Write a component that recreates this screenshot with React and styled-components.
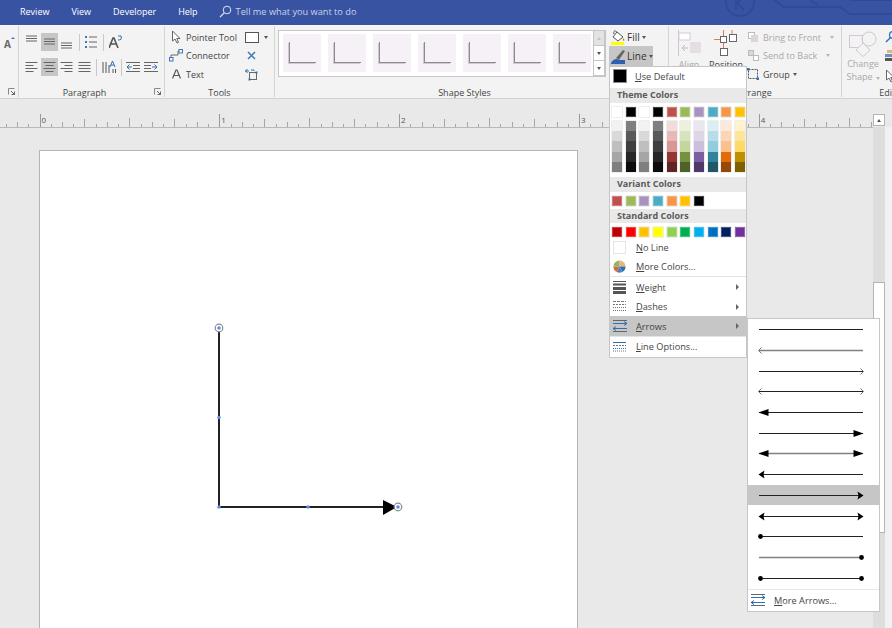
import styled, { createGlobalStyle } from 'styled-components'

const GlobalStyle = createGlobalStyle`
    html, body {
        margin:0;
        padding:0;
        background:#e9e9e9;
    }
    body {
        font-family:"Open Sans", "Liberation Sans", sans-serif;
    }
`

const Window = styled.div`
    position:relative;
    display:flex;
    flex-direction:column;
    width:892px;
    height:628px;
    overflow:hidden;
    background:#e9e9e9;
`

/* title bar */
const TitleBar = styled.div`
    position:relative;
    display:flex;
    align-items:center;
    flex:none;
    height:25px;
    padding-left:20px;
    background:#3953a3;
    color:#ffffff;
    font-size:9px;
`
const Tab = styled.span`
    margin-right:${(p) => p.$gap}px;
    padding-bottom:2px;
`
const TellMe = styled.span`
    display:flex;
    align-items:center;
    gap:4px;
    padding-bottom:2px;
    font-size:9.2px;
    color:#c9d2e8;
`
const TitleArt = styled.svg`
    position:absolute;
    top:0;
    right:0;
`

/* ribbon */
const Ribbon = styled.div`
    display:flex;
    flex:none;
    height:72px;
    background:#f3f3f3;
    border-top:1px solid #f8f8f8;
    border-bottom:1px solid #d2d2d2;
    color:#444444;
    font-size:9px;
`
const Group = styled.div`
    position:relative;
    display:flex;
    flex-direction:column;
    flex:none;
    width:${(p) => p.$width}px;
    height:71px;
    border-right:1px solid #d4d4d4;
    box-sizing:border-box;
`
const GroupBody = styled.div`
    display:flex;
    flex:1;
    min-height:0;
`
const GroupLabel = styled.div`
    flex:none;
    height:11px;
    padding-right:${(p) => p.$shift || 0}px;
    text-align:center;
    white-space:nowrap;
    line-height:14px;
    font-size:9px;
`
const Launcher = styled.svg`
    position:absolute;
    right:3px;
    bottom:2px;
`
const Stack = styled.div`
    display:flex;
    flex-direction:column;
    padding-top:${(p) => p.$top || 0}px;
    gap:${(p) => p.$gap || 0}px;
`
const ShrunkFont = styled.div`
    position:relative;
    padding:12px 0 0 4px;
    font-size:10px;
    font-weight:700;
    line-height:12px;
    color:#666666;
`
const ShrinkCaret = styled.span`
    position:absolute;
    top:11px;
    left:11px;
    width:0;
    height:0;
    border-left:2px solid transparent;
    border-right:2px solid transparent;
    border-bottom:2px solid #3f78b8;
`
const IconRow = styled.div`
    display:flex;
    align-items:center;
    flex:none;
    height:18px;
    padding-left:4px;
`
const IconCell = styled.div`
    display:flex;
    align-items:center;
    justify-content:center;
    width:17.5px;
    height:18px;
    background:${(p) => (p.$on ? '#c6c6c6' : 'transparent')};
`
const Divider = styled.span`
    width:1px;
    height:17px;
    margin:0 ${(p) => p.$space}px;
    background:#c8c8c8;
`

const ToolRow = styled.div`
    display:flex;
    align-items:center;
    flex:none;
    height:18.5px;
    white-space:nowrap;
`
const ToolIcon = styled.span`
    display:flex;
    align-items:center;
    justify-content:center;
    flex:none;
    width:20px;
`
const ToolColumn = styled.div`
    display:flex;
    flex-direction:column;
    flex:none;
    width:72px;
    padding:2px 0 0 1px;
    box-sizing:border-box;
`
const ToolSide = styled.div`
    display:flex;
    flex-direction:column;
    align-items:flex-start;
    padding:2px 0 0 8px;
`
const SideCell = styled.div`
    display:flex;
    align-items:center;
    flex:none;
    gap:5px;
    height:18.5px;
    padding-left:${(p) => p.$left || 0}px;
`
const OutlineBox = styled.span`
    width:12px;
    height:9px;
    background:#ffffff;
    border:1px solid #555555;
`
const Caret = styled.span`
    display:inline-block;
    width:0;
    height:0;
    margin-left:${(p) => p.$space ?? 3}px;
    border-left:2.5px solid transparent;
    border-right:2.5px solid transparent;
    border-top:3px solid ${(p) => p.$color || '#555555'};
    transform:${(p) => (p.$up ? 'rotate(180deg)' : 'none')};
`

const Gallery = styled.div`
    display:flex;
    flex:none;
    height:47px;
    margin:4px 0 0 3px;
    background:#ffffff;
    border:1px solid #c6c6c6;
    box-sizing:border-box;
`
const GalleryTiles = styled.div`
    display:flex;
    gap:7px;
    width:314px;
    padding:3px 0 0 4px;
    box-sizing:border-box;
`
const Tile = styled.div`
    flex:none;
    width:38px;
    height:38px;
    padding:8px 0 0 6px;
    background:#f6f1f7;
    box-sizing:border-box;
`
const TileShape = styled.div`
    width:26px;
    height:20px;
    border-left:1px solid #8e8a90;
    border-bottom:1px solid #8e8a90;
    box-shadow:-1px 1px 0 #cfcbd1;
`
const GalleryScroll = styled.div`
    display:flex;
    flex-direction:column;
    flex:none;
    width:12px;
    margin-top:-1px;
`
const ScrollCell = styled.div`
    display:flex;
    align-items:center;
    justify-content:center;
    flex:1;
    background:${(p) => (p.$off ? '#e3e3e3' : '#ffffff')};
    border:1px solid #c6c6c6;
    border-top:${(p) => (p.$off ? '1px solid #c6c6c6' : 'none')};
`
const FillColumn = styled.div`
    display:flex;
    flex-direction:column;
    margin:2px 0 0 3px;
`
const FillRow = styled.div`
    display:flex;
    align-items:center;
    gap:2px;
    width:44px;
    height:${(p) => p.$height}px;
    padding-left:2px;
    box-sizing:border-box;
    background:${(p) => (p.$on ? '#c6c6c6' : 'transparent')};
    font-size:10px;
    color:#333333;
`

const BigTool = styled.div`
    display:flex;
    flex-direction:column;
    align-items:center;
    flex:none;
    width:${(p) => p.$width}px;
    padding-top:${(p) => p.$top || 4}px;
    color:${(p) => (p.$off ? '#a9a9a9' : '#444444')};
    line-height:13px;
`
const ArrangeText = styled.span`
    color:${(p) => (p.$off ? '#a9a9a9' : '#444444')};
`
const EditIcons = styled.div`
    display:flex;
    flex-direction:column;
    gap:7px;
    padding:4px 0 0 1px;
`

/* ruler */
const RulerBar = styled.div`
    display:flex;
    align-items:flex-end;
    flex:none;
    height:28px;
`
const RulerArt = styled.svg`
    display:block;
    flex:none;
`
const ScrollUp = styled.div`
    display:flex;
    align-items:center;
    justify-content:center;
    flex:none;
    width:12px;
    height:12px;
    margin-bottom:1px;
    background:#ffffff;
    border:1px solid #b4b4b4;
    box-sizing:border-box;
`

/* drawing area */
const Workspace = styled.div`
    display:flex;
    flex:1;
    min-height:0;
`
const Canvas = styled.div`
    flex:none;
    width:873px;
    border-top:1px solid #b8b8b8;
    box-sizing:border-box;
    overflow:hidden;
`
const DrawingPage = styled.div`
    position:relative;
    width:539px;
    height:600px;
    margin:22px 0 0 39px;
    background:#ffffff;
    border:1px solid #b4b4b4;
    box-sizing:border-box;
`
const Drawing = styled.svg`
    position:absolute;
    top:0;
    left:0;
`
const ScrollBar = styled.div`
    display:flex;
    flex-direction:column;
    flex:none;
    width:12px;
    background:#dedede;
`
const ScrollThumb = styled.div`
    width:12px;
    height:251px;
    margin-top:155px;
    background:#ffffff;
    border:1px solid #b4b4b4;
    box-sizing:border-box;
`
const ScrollEdge = styled.div`
    flex:1;
    background:#f1f1f1;
`

/* line dropdown */
const LineMenu = styled.div`
    position:absolute;
    top:66px;
    left:609px;
    width:138px;
    height:292px;
    background:#ffffff;
    border:1px solid #c6c6c6;
    box-sizing:border-box;
    color:#444444;
    font-size:9.2px;
`
const DefaultRow = styled.div`
    display:flex;
    align-items:center;
    height:20px;
    padding-bottom:2px;
    box-sizing:border-box;
`
const DefaultSwatch = styled.span`
    width:12px;
    height:12px;
    margin:0 8px 0 3px;
    background:#000000;
    border:1px solid #8a8a8a;
`
const MenuHeader = styled.div`
    height:14.5px;
    margin-top:${(p) => p.$top}px;
    padding-left:7px;
    background:#e9e9e9;
    line-height:14px;
    font-size:9px;
    font-weight:700;
    color:#5a5a5a;
`
const SwatchRow = styled.div`
    display:grid;
    grid-template-columns:repeat(10, 10px);
    column-gap:3.67px;
    margin:4px 0 0 2px;
`
const Swatch = styled.span`
    height:10px;
    background:${(p) => p.$color};
    box-shadow:inset 0 0 0 1px rgba(255, 255, 255, 0.25), 0 0 0 0.5px #dddddd;
`
const ShadeColumn = styled.div`
    display:flex;
    flex-direction:column;
    box-shadow:0 0 0 0.5px #dddddd;
`
const Shade = styled.span`
    height:10.4px;
    background:${(p) => p.$color};
`
const MenuRow = styled.div`
    display:flex;
    align-items:center;
    height:19.5px;
    background:${(p) => (p.$on ? '#c6c6c6' : 'transparent')};
`
const MenuIcon = styled.span`
    display:flex;
    align-items:center;
    justify-content:center;
    flex:none;
    width:19px;
    margin-right:7px;
`
const MenuText = styled.span`
    flex:1;
    white-space:nowrap;
`
const NoLineBox = styled.span`
    width:13px;
    height:13px;
    border:1px solid #e4e4e4;
    box-sizing:border-box;
`
const SideArrow = styled.span`
    width:0;
    height:0;
    margin-right:7px;
    border-top:3px solid transparent;
    border-bottom:3px solid transparent;
    border-left:3px solid #666666;
`
const MenuLine = styled.div`
    height:1px;
    background:#e4e4e4;
`

/* arrows submenu */
const ArrowMenu = styled.div`
    position:absolute;
    top:251px;
    left:137px;
    width:133px;
    height:294px;
    background:#ffffff;
    border:1px solid #c6c6c6;
    box-sizing:border-box;
`
const ArrowRow = styled.div`
    display:flex;
    align-items:center;
    height:20.7px;
    padding-left:10px;
    background:${(p) => (p.$on ? '#c6c6c6' : 'transparent')};
`
const MoreArrows = styled.div`
    display:flex;
    align-items:center;
    height:21px;
    margin-top:1px;
    border-top:1px solid #e8e8e8;
`

const themeColors = ['#ffffff', '#000000', '#ffffff', '#000000', '#c0504d', '#9bbb59', '#a893c0', '#4bacc6', '#f79646', '#ffc000']
const shades = [
    ['#f2f2f2', '#d9d9d9', '#bfbfbf', '#a6a6a6', '#7f7f7f'],
    ['#7f7f7f', '#595959', '#3f3f3f', '#262626', '#0c0c0c'],
    ['#f2f2f2', '#d9d9d9', '#bfbfbf', '#a6a6a6', '#7f7f7f'],
    ['#7f7f7f', '#595959', '#3f3f3f', '#262626', '#0c0c0c'],
    ['#f2dcdb', '#e6b9b8', '#d99694', '#953735', '#632523'],
    ['#ebf1dd', '#d7e3bc', '#c3d69b', '#76923c', '#4f6128'],
    ['#eae6f1', '#dcd6e6', '#cbbfdc', '#7c5fa0', '#4f3a6b'],
    ['#dbeef3', '#b7dde8', '#92cddc', '#31859b', '#205867'],
    ['#fde9d9', '#fbd5b5', '#fac08f', '#e36c09', '#974806'],
    ['#fff2cc', '#ffe599', '#ffd966', '#bf8f00', '#7f6000'],
]
const variantColors = ['#c0504d', '#9bbb59', '#a893c0', '#4bacc6', '#f79646', '#ffc000', '#000000']
const standardColors = ['#c00000', '#ff0000', '#ffc000', '#ffff00', '#92d050', '#00b050', '#00b0f0', '#0070c0', '#002060', '#7030a0']

const arrowSamples = [
    ['none', 'none', 1], ['open', 'none', 1.6], ['none', 'open', 1], ['open', 'open', 1],
    ['solid', 'none', 1], ['none', 'solid', 1], ['solid', 'solid', 1.6], ['barb', 'none', 1],
    ['none', 'barb', 1], ['barb', 'barb', 1], ['dot', 'none', 1], ['none', 'dot', 1.6], ['dot', 'dot', 1],
]

const tickHeight = (i) => {
    if (i % 16 === 0) return 13
    if (i % 8 === 0) return 9
    if (i % 4 === 0) return 8
    if (i % 2 === 0) return 5
    return 3
}

function ArrowEnd({ type, x, dir }) {
    if (type === 'open') return <path d={`M${x + dir * 3} 7.5 L${x} 10.5 L${x + dir * 3} 13.5`} fill="none" stroke="#555" strokeWidth="0.8" />
    if (type === 'solid') return <path d={`M${x} 10.5 L${x + dir * 10} 7 V14 Z`} fill="#000" />
    if (type === 'barb') return <path d={`M${x} 10.5 L${x + dir * 6} 6.5 L${x + dir * 5} 10.5 L${x + dir * 6} 14.5 Z`} fill="#000" />
    if (type === 'dot') return <circle cx={x + dir * 2} cy="10.5" r="2.4" fill="#000" />
    return null
}

function ArrowSample({ start, end, weight }) {
    return (
        <svg width="108" height="20" viewBox="0 0 108 20">
            <line x1="1" y1="10.5" x2="105" y2="10.5" stroke={weight > 1 ? '#808080' : '#222'} strokeWidth={weight} />
            <ArrowEnd type={start} x={0.5} dir={1} />
            <ArrowEnd type={end} x={105.5} dir={-1} />
        </svg>
    )
}

function AlignLines({ widths, align = 'left' }) {
    return (
        <svg width="13" height="14" viewBox="0 0 13 14">
            {widths.map((w, i) => {
                const x = align === 'left' ? 0.5 : align === 'right' ? 12.5 - w : 6.5 - w / 2
                return <line key={i} x1={x} x2={x + w} y1={2.5 + i * 3} y2={2.5 + i * 3} stroke="#666" />
            })}
        </svg>
    )
}

function VerticalAlign({ offset }) {
    return (
        <svg width="13" height="16" viewBox="0 0 13 16">
            {[0, 1, 2].map((i) => <line key={i} x1="1" x2="12" y1={offset + i * 2.5} y2={offset + i * 2.5} stroke="#666" />)}
        </svg>
    )
}

function BulletIcon() {
    return (
        <svg width="12" height="14" viewBox="0 0 12 14">
            {[2, 7, 12].map((y) => (
                <g key={y}>
                    <rect x="0" y={y - 1} width="2" height="2" fill="#3f78b8" />
                    <line x1="4" x2="12" y1={y} y2={y} stroke="#666" />
                </g>
            ))}
        </svg>
    )
}

function IndentIcon({ flip }) {
    return (
        <svg width="14" height="14" viewBox="0 0 14 14">
            <line x1="0" x2="14" y1="2.5" y2="2.5" stroke="#666" />
            <line x1={flip ? 7 : 0} x2={flip ? 14 : 7} y1="5.5" y2="5.5" stroke="#666" />
            <line x1={flip ? 7 : 0} x2={flip ? 14 : 7} y1="8.5" y2="8.5" stroke="#666" />
            <line x1="0" x2="14" y1="11.5" y2="11.5" stroke="#666" />
            <path d={flip ? 'M6 7H1M1 7l2.5-2.5M1 7l2.5 2.5' : 'M8 7h5M13 7l-2.5-2.5M13 7l-2.5 2.5'} stroke="#2f6fb5" fill="none" />
        </svg>
    )
}

function LauncherIcon() {
    return (
        <Launcher width="7" height="7" viewBox="0 0 7 7">
            <path d="M0.5 6.5V0.5H6.5" fill="none" stroke="#888" />
            <path d="M3 3L6.5 6.5M6.5 3.5V6.5H3.5" fill="none" stroke="#666" />
        </Launcher>
    )
}

function DoubleArrowIcon() {
    return (
        <svg width="14" height="14" viewBox="0 0 14 14">
            <line x1="0" x2="14" y1="1.5" y2="1.5" stroke="#666" />
            <line x1="0" x2="14" y1="12.5" y2="12.5" stroke="#666" />
            <path d="M0 4.5H14M11 2.5l3 2-3 2M0 9.5H14M3 7.5l-3 2 3 2" fill="none" stroke="#2f6fb5" />
        </svg>
    )
}

function App() {
    const ticks = []
    for (let i = -3; i < 80; i++) ticks.push(i)

    return (
        <Window>
            <GlobalStyle />
            <TitleBar>
                <Tab $gap={22}>Review</Tab>
                <Tab $gap={22}>View</Tab>
                <Tab $gap={22}>Developer</Tab>
                <Tab $gap={21}>Help</Tab>
                <TellMe>
                    <svg width="13" height="13" viewBox="0 0 13 13">
                        <circle cx="8" cy="5" r="3.8" fill="none" stroke="#dfe5f3" />
                        <line x1="5.2" y1="7.8" x2="1" y2="12" stroke="#dfe5f3" strokeWidth="1.2" />
                    </svg>
                    Tell me what you want to do
                </TellMe>
                <TitleArt width="170" height="25" viewBox="0 0 170 25" fill="none" stroke="#2f4a96" strokeWidth="2">
                    <circle cx="18" cy="2" r="14" />
                    <path d="M14 -4V10M22 -4L15 3L22 10" />
                    <path d="M52 0L62 7H118L128 14H170M88 0L96 5M128 0H170" />
                </TitleArt>
            </TitleBar>

            <Ribbon>
                <Group $width={19}>
                    <GroupBody>
                        <ShrunkFont>A<ShrinkCaret /></ShrunkFont>
                    </GroupBody>
                    <LauncherIcon />
                </Group>

                <Group $width={146}>
                    <GroupBody>
                        <Stack $top={7} $gap={7}>
                            <IconRow>
                                <IconCell><VerticalAlign offset={2} /></IconCell>
                                <IconCell $on><VerticalAlign offset={5} /></IconCell>
                                <IconCell><VerticalAlign offset={9} /></IconCell>
                                <Divider $space={3} />
                                <IconCell><BulletIcon /></IconCell>
                                <Divider $space={3} />
                                <IconCell>
                                    <svg width="14" height="14" viewBox="0 0 14 14">
                                        <path d="M0 13L4 3H5L9 13M2 9H7" fill="none" stroke="#555" strokeWidth="1.6" />
                                        <path d="M9 5c3 0 4-1 3-4M9 1l3 0" fill="none" stroke="#2f6fb5" />
                                    </svg>
                                </IconCell>
                            </IconRow>
                            <IconRow>
                                <IconCell><AlignLines widths={[12, 8, 12, 8]} /></IconCell>
                                <IconCell $on><AlignLines widths={[12, 8, 12, 8]} align="center" /></IconCell>
                                <IconCell><AlignLines widths={[12, 8, 12, 8]} align="right" /></IconCell>
                                <IconCell><AlignLines widths={[12, 12, 12, 12]} /></IconCell>
                                <Divider $space={3} />
                                <IconCell>
                                    <svg width="14" height="14" viewBox="0 0 14 14">
                                        <path d="M1 2V13M4 2V13M7 5V13M11 9V13M13.5 9V13" stroke="#555" fill="none" />
                                        <path d="M8 7L10.5 1L13 7M9 5H12" stroke="#2f6fb5" fill="none" />
                                    </svg>
                                </IconCell>
                                <Divider $space={3} />
                                <IconCell><IndentIcon flip /></IconCell>
                                <IconCell><IndentIcon /></IconCell>
                            </IconRow>
                        </Stack>
                    </GroupBody>
                    <GroupLabel $shift={14}>Paragraph</GroupLabel>
                    <LauncherIcon />
                </Group>

                <Group $width={110}>
                    <GroupBody>
                        <ToolColumn>
                            <ToolRow>
                                <ToolIcon>
                                    <svg width="10" height="14" viewBox="0 0 10 14">
                                        <path d="M1.5 1V11L4 9L6 13L7.5 12.3L5.8 8.5H9Z" fill="#fff" stroke="#666" />
                                    </svg>
                                </ToolIcon>
                                Pointer Tool
                            </ToolRow>
                            <ToolRow>
                                <ToolIcon>
                                    <svg width="14" height="13" viewBox="0 0 14 13">
                                        <rect x="0.5" y="8.5" width="3.5" height="3.5" fill="none" stroke="#3f78b8" />
                                        <rect x="10" y="0.5" width="3.5" height="3.5" fill="none" stroke="#3f78b8" />
                                        <path d="M2 8V6H9V2H10" fill="none" stroke="#666" />
                                    </svg>
                                </ToolIcon>
                                Connector
                            </ToolRow>
                            <ToolRow>
                                <ToolIcon>
                                    <svg width="9" height="10" viewBox="0 0 9 10">
                                        <path d="M0.5 9.5L4 1H5L8.5 9.5M2 6.5H7" fill="none" stroke="#555" strokeWidth="1.2" />
                                    </svg>
                                </ToolIcon>
                                Text
                            </ToolRow>
                        </ToolColumn>
                        <ToolSide>
                            <SideCell>
                                <OutlineBox />
                                <Caret $space={0} />
                            </SideCell>
                            <SideCell $left={2}>
                                <svg width="9" height="9" viewBox="0 0 9 9">
                                    <path d="M1 1L8 8M8 1L1 8" stroke="#3f78b8" strokeWidth="1.5" />
                                </svg>
                            </SideCell>
                            <SideCell>
                                <svg width="14" height="13" viewBox="0 0 14 13">
                                    <rect x="4.5" y="4.5" width="7" height="7" fill="none" stroke="#666" />
                                    <path d="M0 3H4M2.5 1L0.5 3L2.5 5M6 2H9V3" fill="none" stroke="#2f6fb5" />
                                    <rect x="3.5" y="10.5" width="2" height="2" fill="#2f6fb5" />
                                    <rect x="10.5" y="3.5" width="2" height="2" fill="#2f6fb5" />
                                </svg>
                            </SideCell>
                        </ToolSide>
                    </GroupBody>
                    <GroupLabel>Tools</GroupLabel>
                </Group>

                <Group $width={394}>
                    <GroupBody>
                        <Gallery>
                            <GalleryTiles>
                                {[0, 1, 2, 3, 4, 5, 6].map((i) => <Tile key={i}><TileShape /></Tile>)}
                            </GalleryTiles>
                            <GalleryScroll>
                                <ScrollCell $off><Caret $space={0} $up $color="#c2c2c2" /></ScrollCell>
                                <ScrollCell><Caret $space={0} /></ScrollCell>
                                <ScrollCell><Caret $space={0} /></ScrollCell>
                            </GalleryScroll>
                        </Gallery>
                        <FillColumn>
                            <FillRow $height={18}>
                                <svg width="14" height="15" viewBox="0 0 14 15">
                                    <path d="M6 2L12 7L7 11L2 7Z" fill="#fff" stroke="#555" />
                                    <path d="M6 2C4 0 2 1 3 4" fill="none" stroke="#555" />
                                    <path d="M12 8C13 9 14 10 13 11C12 11 11.5 10 12 8Z" fill="#d0782a" />
                                    <rect x="0" y="12" width="13" height="3" fill="#ffff00" />
                                </svg>
                                Fill<Caret $space={0} />
                            </FillRow>
                            <FillRow $height={20} $on>
                                <svg width="14" height="15" viewBox="0 0 14 15">
                                    <path d="M5 9L12 1L14 2L8 11Z" fill="#666" />
                                    <path d="M0 14C2 10 6 9 8 11C10 11 12 11 14 11V15H0Z" fill="#2f5fb0" />
                                </svg>
                                Line<Caret $space={0} />
                            </FillRow>
                        </FillColumn>
                    </GroupBody>
                    <GroupLabel $shift={14}>Shape Styles</GroupLabel>
                </Group>

                <Group $width={173}>
                    <GroupBody>
                        <BigTool $width={40} $off>
                            <svg width="24" height="28" viewBox="0 0 24 28">
                                <path d="M1.5 0V26" stroke="#c9c9c9" />
                                <rect x="2" y="3" width="11" height="7" fill="#fff" stroke="#d9c9d9" />
                                <rect x="13" y="12" width="11" height="11" fill="#e5dfe5" />
                                <path d="M5 18H11M5 18l3-3M5 18l3 3" stroke="#bbb" fill="none" />
                            </svg>
                            Align
                        </BigTool>
                        <BigTool $width={34}>
                            <svg width="24" height="28" viewBox="0 0 24 28">
                                <rect x="6.5" y="6.5" width="6" height="6" fill="#fff" stroke="#666" />
                                <rect x="15.5" y="4.5" width="7" height="7" fill="#fff" stroke="#666" />
                                <rect x="6.5" y="18.5" width="7" height="7" fill="#fff" stroke="#666" />
                                <path d="M0 9.5H6M9.5 0V6M9.5 13V18M18 0V4" stroke="#e07a5f" fill="none" />
                            </svg>
                            Position
                        </BigTool>
                        <Stack $top={2}>
                            <ToolRow>
                                <ToolIcon>
                                    <svg width="11" height="11" viewBox="0 0 11 11">
                                        <rect x="0.5" y="0.5" width="6" height="6" fill="#fff" stroke="#bbb" />
                                        <rect x="3" y="3" width="7" height="7" fill="#dcd6dc" />
                                    </svg>
                                </ToolIcon>
                                <ArrangeText $off>Bring to Front</ArrangeText>
                                <Caret $space={9} $color="#b5b5b5" />
                            </ToolRow>
                            <ToolRow>
                                <ToolIcon>
                                    <svg width="11" height="11" viewBox="0 0 11 11">
                                        <rect x="0.5" y="0.5" width="5" height="5" fill="#dcd6dc" stroke="#bbb" />
                                        <rect x="5.5" y="5.5" width="5" height="5" fill="#fff" stroke="#bbb" />
                                    </svg>
                                </ToolIcon>
                                <ArrangeText $off>Send to Back</ArrangeText>
                                <Caret $space={9} $color="#b5b5b5" />
                            </ToolRow>
                            <ToolRow>
                                <ToolIcon>
                                    <svg width="12" height="12" viewBox="0 0 12 12">
                                        <rect x="1.5" y="1.5" width="9" height="9" fill="none" stroke="#555" strokeDasharray="2 1" />
                                        <rect x="0" y="0" width="2.5" height="2.5" fill="#2f6fb5" />
                                        <rect x="9.5" y="9.5" width="2.5" height="2.5" fill="#2f6fb5" />
                                    </svg>
                                </ToolIcon>
                                <ArrangeText>Group</ArrangeText>
                                <Caret />
                            </ToolRow>
                        </Stack>
                    </GroupBody>
                    <GroupLabel>Arrange</GroupLabel>
                </Group>

                <Group $width={104}>
                    <GroupBody>
                        <BigTool $width={42} $off $top={5}>
                            <svg width="30" height="26" viewBox="0 0 30 26" fill="none" stroke="#d2c8d2">
                                <rect x="1.5" y="4.5" width="13" height="12" />
                                <circle cx="21" cy="8" r="7" />
                                <path d="M15 12L22 19L15 25.5L8 19Z" fill="#f3f3f3" />
                            </svg>
                            <span>Change</span>
                            <span>Shape<Caret $color="#b5b5b5" /></span>
                        </BigTool>
                        <EditIcons>
                            <svg width="12" height="13" viewBox="0 0 12 13">
                                <circle cx="8" cy="5" r="3.5" fill="none" stroke="#2f6fb5" strokeWidth="1.2" />
                                <line x1="5.5" y1="7.5" x2="1" y2="12" stroke="#2f6fb5" strokeWidth="1.5" />
                            </svg>
                            <svg width="12" height="12" viewBox="0 0 12 12">
                                <rect x="2" y="0" width="10" height="3" fill="#d8b878" />
                                <rect x="0" y="4" width="12" height="3" fill="#6f8fbf" />
                                <rect x="0" y="8" width="12" height="3" fill="#555" />
                            </svg>
                            <svg width="10" height="14" viewBox="0 0 10 14">
                                <path d="M1.5 1V11L4 9L6 13L7.5 12.3L5.8 8.5H9Z" fill="#fff" stroke="#666" />
                            </svg>
                        </EditIcons>
                    </GroupBody>
                    <GroupLabel>Editing</GroupLabel>
                </Group>
            </Ribbon>

            <RulerBar>
                <RulerArt width="873" height="28" viewBox="0 0 873 28">
                    {ticks.map((i) => {
                        const x = Math.round(39.5 + i * 11.24) + 0.5
                        const h = tickHeight(i)
                        return <line key={i} x1={x} x2={x} y1={28 - h} y2="28" stroke={i % 16 === 0 ? '#9a9a9a' : '#a6a6a6'} />
                    })}
                    {[0, 1, 2, 3, 4].map((n) => <text key={n} x={41.5 + n * 179.8} y="24" fontSize="8" fill="#555" fontFamily="Open Sans">{n}</text>)}
                </RulerArt>
                <ScrollUp><Caret $space={0} $up /></ScrollUp>
            </RulerBar>

            <Workspace>
                <Canvas>
                    <DrawingPage>
                        <Drawing width="380" height="380" viewBox="40 151 380 380">
                            <path d="M219 328V507H386" fill="none" stroke="#222" strokeWidth="2" />
                            <path d="M397 507L383 500V515Z" fill="#000" />
                            <circle cx="219" cy="328" r="3.8" fill="#fff" stroke="#8a8a8a" strokeWidth="1.2" />
                            <circle cx="398" cy="507" r="3.8" fill="#fff" stroke="#8a8a8a" strokeWidth="1.2" />
                            {[[219, 328], [398, 507], [219, 417.5], [308, 507], [219, 507]].map(([x, y]) => <circle key={x + '-' + y} cx={x} cy={y} r="1.8" fill="#5b8fe8" />)}
                        </Drawing>
                    </DrawingPage>
                </Canvas>
                <ScrollBar><ScrollThumb /></ScrollBar>
                <ScrollEdge />
            </Workspace>

            <LineMenu>
                <DefaultRow>
                    <DefaultSwatch />
                    <MenuText><u>U</u>se Default</MenuText>
                </DefaultRow>
                <MenuHeader $top={1}>Theme Colors</MenuHeader>
                <SwatchRow>{themeColors.map((c, i) => <Swatch key={i} $color={c} />)}</SwatchRow>
                <SwatchRow>
                    {shades.map((col, i) => (
                        <ShadeColumn key={i}>{col.map((c) => <Shade key={c} $color={c} />)}</ShadeColumn>
                    ))}
                </SwatchRow>
                <MenuHeader $top={5}>Variant Colors</MenuHeader>
                <SwatchRow>{variantColors.map((c) => <Swatch key={c} $color={c} />)}</SwatchRow>
                <MenuHeader $top={3}>Standard Colors</MenuHeader>
                <SwatchRow>{standardColors.map((c) => <Swatch key={c} $color={c} />)}</SwatchRow>
                <MenuRow>
                    <MenuIcon><NoLineBox /></MenuIcon>
                    <MenuText><u>N</u>o Line</MenuText>
                </MenuRow>
                <MenuRow>
                    <MenuIcon>
                        <svg width="13" height="13" viewBox="0 0 14 14">
                            <path d="M7 7V0.5A6.5 6.5 0 0 1 13.5 7Z" fill="#e9b872" />
                            <path d="M7 7H13.5A6.5 6.5 0 0 1 10 13Z" fill="#2f6fb5" />
                            <path d="M7 7L10 13A6.5 6.5 0 0 1 4 13Z" fill="#4f81bd" />
                            <path d="M7 7L4 13A6.5 6.5 0 0 1 0.5 7Z" fill="#d9693a" />
                            <path d="M7 7H0.5A6.5 6.5 0 0 1 7 0.5Z" fill="#8fb46a" />
                        </svg>
                    </MenuIcon>
                    <MenuText><u>M</u>ore Colors...</MenuText>
                </MenuRow>
                <MenuLine />
                <MenuRow>
                    <MenuIcon>
                        <svg width="13" height="13" viewBox="0 0 13 13">
                            <rect y="0" width="13" height="1" fill="#555" />
                            <rect y="2.5" width="13" height="2" fill="#555" />
                            <rect y="6" width="13" height="3" fill="#555" />
                            <rect y="10" width="13" height="3" fill="#555" />
                        </svg>
                    </MenuIcon>
                    <MenuText><u>W</u>eight</MenuText>
                    <SideArrow />
                </MenuRow>
                <MenuRow>
                    <MenuIcon>
                        <svg width="13" height="13" viewBox="0 0 13 13" stroke="#777" fill="none">
                            <path d="M0 1.5H13" strokeDasharray="3 1" />
                            <path d="M0 4.5H13" strokeDasharray="2 1" />
                            <path d="M0 7.5H13" strokeDasharray="1 1" />
                            <path d="M0 10.5H13" strokeDasharray="1 1" />
                        </svg>
                    </MenuIcon>
                    <MenuText><u>D</u>ashes</MenuText>
                    <SideArrow />
                </MenuRow>
                <MenuRow $on>
                    <MenuIcon><DoubleArrowIcon /></MenuIcon>
                    <MenuText><u>A</u>rrows</MenuText>
                    <SideArrow />
                </MenuRow>
                <MenuLine />
                <MenuRow>
                    <MenuIcon>
                        <svg width="13" height="11" viewBox="0 0 13 11" fill="none">
                            <path d="M0 1.5H13" stroke="#2f6fb5" />
                            <path d="M0 4.5H13" stroke="#777" strokeDasharray="2 1" />
                            <path d="M0 7.5H13" stroke="#2f6fb5" strokeDasharray="1 1" />
                            <path d="M0 10H13" stroke="#777" strokeDasharray="1 1" />
                        </svg>
                    </MenuIcon>
                    <MenuText><u>L</u>ine Options...</MenuText>
                </MenuRow>

                <ArrowMenu>
                    {arrowSamples.map(([start, end, weight], i) => (
                        <ArrowRow key={i} $on={i === 8}>
                            <ArrowSample start={start} end={end} weight={weight} />
                        </ArrowRow>
                    ))}
                    <MoreArrows>
                        <MenuIcon><DoubleArrowIcon /></MenuIcon>
                        <MenuText><u>M</u>ore Arrows...</MenuText>
                    </MoreArrows>
                </ArrowMenu>
            </LineMenu>
        </Window>
    )
}

export default App
